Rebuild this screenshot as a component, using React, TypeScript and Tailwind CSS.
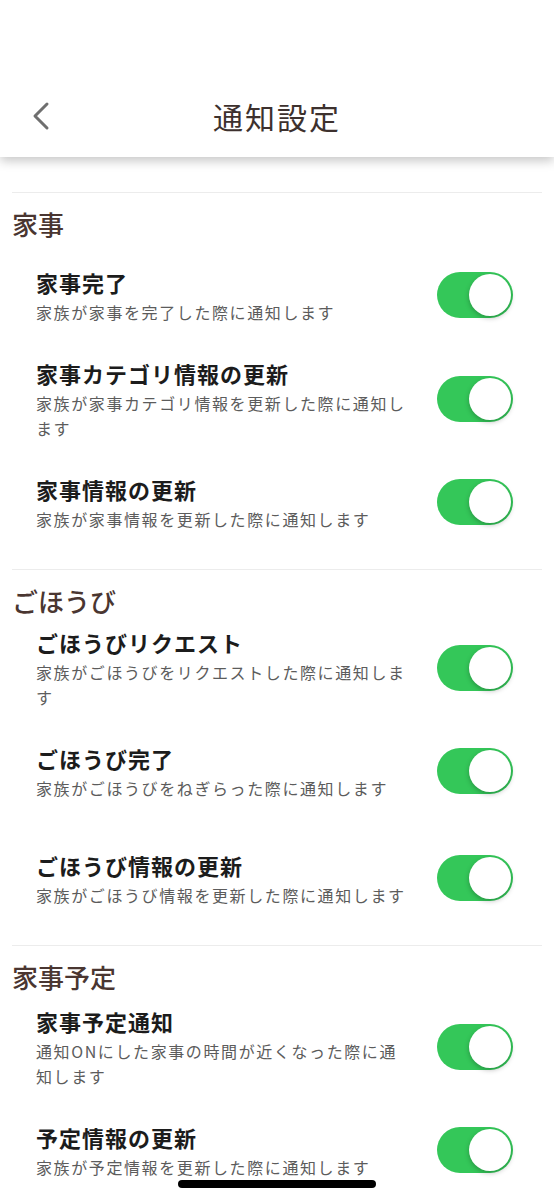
const sections = [
  {
    title: "家事",
    headGap: "mb-[9px]",
    items: [
      { title: "家事完了", body: "家族が家事を完了した際に通知します" },
      { title: "家事カテゴリ情報の更新", body: "家族が家事カテゴリ情報を更新した際に通知します" },
      { title: "家事情報の更新", body: "家族が家事情報を更新した際に通知します" },
    ],
  },
  {
    title: "ごほうび",
    headGap: "-mb-[8px]",
    items: [
      { title: "ごほうびリクエスト", body: "家族がごほうびをリクエストした際に通知します" },
      { title: "ごほうび完了", body: "家族がごほうびをねぎらった際に通知します", extra: true },
      { title: "ごほうび情報の更新", body: "家族がごほうび情報を更新した際に通知します" },
    ],
  },
  {
    title: "家事予定",
    headGap: "-mb-[5px]",
    items: [
      { title: "家事予定通知", body: "通知ONにした家事の時間が近くなった際に通知します" },
      { title: "予定情報の更新", body: "家族が予定情報を更新した際に通知します" },
    ],
  },
];

const Toggle = () => (
  <div className="flex h-[46px] w-[76px] shrink-0 items-center justify-end rounded-full bg-[#34c759] p-[2px]">
    <span className="h-[42px] w-[42px] rounded-full bg-white shadow-[0_2px_5px_rgba(0,0,0,0.25)]" />
  </div>
);

const SettingRow = ({ item }: { item: { title: string; body: string; extra?: boolean } }) => (
  <div className={`flex items-center justify-between pl-[36px] pr-[41px] pt-[15px] ${item.extra ? "pb-[32px]" : "pb-[16px]"}`}>
    <div className="w-[378px]">
      <h3 className="text-[22px] font-bold leading-[35px] tracking-[1px] text-[#1c1c1c]">{item.title}</h3>
      <p className="text-[16px] leading-[25px] tracking-[1.6px] text-[#5c5c5c]">{item.body}</p>
    </div>
    <Toggle />
  </div>
);

export default function App() {
  return (
    <div
      className="relative min-h-[1200px] w-[554px] overflow-hidden bg-white"
      style={{ fontFamily: '"Noto Sans CJK JP", "Noto Sans", sans-serif' }}
    >
      <header className="relative z-10 flex h-[157px] items-end bg-white pb-[3px] shadow-[0_4px_10px_rgba(0,0,0,0.22)]">
        <div className="relative flex h-[76px] w-full items-center justify-center">
          <svg className="absolute left-[30px] top-[23px]" width="22" height="30" viewBox="0 0 22 30" fill="none">
            <path d="M17 3 L5 15 L17 27" stroke="#6f6f6f" strokeWidth="3" strokeLinecap="round" strokeLinejoin="round" />
          </svg>
          <h1 className="text-[30px] leading-[40px] tracking-[2px] text-[#3d312e]">通知設定</h1>
        </div>
      </header>

      <main className="pt-[35px]">
        {sections.map((section, i) => (
          <section key={section.title} className={i > 0 ? "mt-[21px]" : ""}>
            <div className="mx-[12px] h-px bg-[#ececec]" />
            <h2 className={`mt-[14px] pl-[12px] text-[26px] font-medium leading-[34px] text-[#4a3631] ${section.headGap}`}>
              {section.title}
            </h2>
            {section.items.map((item) => (
              <SettingRow key={item.title} item={item} />
            ))}
          </section>
        ))}
      </main>

      <div className="absolute bottom-[12px] left-[178px] h-[8px] w-[198px] rounded-full bg-black" />
    </div>
  );
}
